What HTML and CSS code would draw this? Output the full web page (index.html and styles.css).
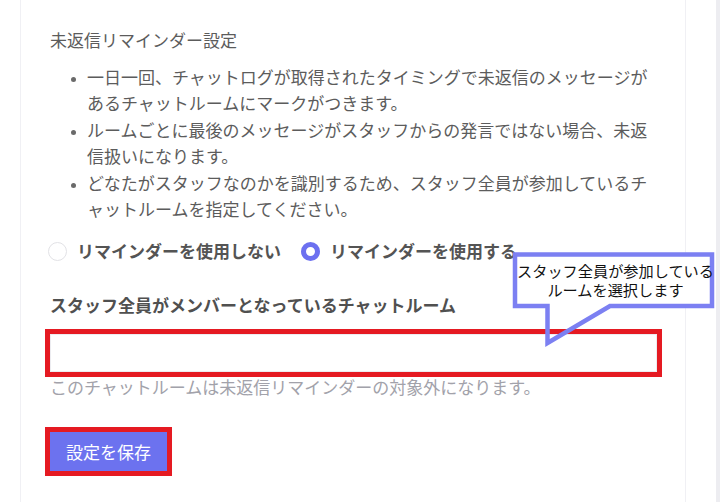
FILE: index.html
```html
<!DOCTYPE html>
<html lang="ja">
<head>
  <meta charset="UTF-8">
  <meta name="viewport" content="width=device-width, initial-scale=1.0">
  <title>未返信リマインダー設定</title>
  <link rel="stylesheet" href="styles.css">
</head>
<body>

  <div class="page">
    <div class="main">
      <div class="card">
        <h2 class="title">未返信リマインダー設定</h2>
        <ul class="notes">
          <li>一日一回、チャットログが取得されたタイミングで未返信のメッセージがあるチャットルームにマークがつきます。</li>
          <li>ルームごとに最後のメッセージがスタッフからの発言ではない場合、未返信扱いになります。</li>
          <li>どなたがスタッフなのかを識別するため、スタッフ全員が参加しているチャットルームを指定してください。</li>
        </ul>

        <div class="radios">
          <label class="radio"><input type="radio" name="reminder" value="off">リマインダーを使用しない</label>
          <label class="radio"><input type="radio" name="reminder" value="on" checked>リマインダーを使用する</label>
        </div>

        <h3 class="field-label">スタッフ全員がメンバーとなっているチャットルーム</h3>
        <input type="text" class="room-input mark">
        <p class="help">このチャットルームは未返信リマインダーの対象外になります。</p>

        <button class="save-btn mark">設定を保存</button>
      </div>
    </div>
    <div class="scroll-track"></div>

    <!-- annotation balloon -->
    <div class="callout">
      <svg class="callout-shape" width="210" height="100" viewBox="511 250 210 100">
        <rect x="515" y="254.5" width="197" height="51.5" fill="#ffffff"/>
        <path d="M515 254.5 H712 V306 H610 L547.5 343 V306 H515 Z" fill="none" stroke="#7c80f2" stroke-width="4.5"/>
      </svg>
      <div class="callout-text">スタッフ全員が参加している<br>ルームを選択します</div>
    </div>
  </div>

</body>
</html>
```

FILE: styles.css
```css
body {
  margin: 0;
  background-color: #ffffff;
  font-family: "Noto Sans CJK JP", "Noto Sans", sans-serif;
  color: #5c5c5c;
}
.page {
  position: relative;
  display: flex;
  height: 502px;
  overflow: hidden;
}
.main {
  flex: 1;
  padding-left: 20px;
  padding-right: 30px;
}
.card {
  height: 100%;
  box-sizing: border-box;
  border-left: 1px solid #f0f0f4;
  border-right: 1px solid #f0f0f4;
  padding: 28px 28px 0 29px;
}
.scroll-track {
  width: 4px;
  background-color: #ededf1;
}
.title {
  margin: 0;
  font-size: 17px;
  font-weight: normal;
  line-height: 24px;
  color: #5c5c5c;
}
.notes {
  margin: 12px 0 0;
  padding-left: 37px;
  font-size: 17px;
  line-height: 26.4px;
  color: #5c5c5c;
}
.notes li::marker {
  font-size: 12px;
  color: #6a6a6a;
}
.radios {
  display: flex;
  align-items: center;
  gap: 20px;
  margin: 17px 0 0 -2px;
  height: 24px;
}
.radio {
  display: flex;
  align-items: center;
  gap: 10px;
  font-size: 17px;
  font-weight: bold;
  line-height: 24px;
  color: #545454;
}
.radio input {
  appearance: none;
  margin: 0;
  width: 19px;
  height: 19px;
  border: 1px solid #e2e2e6;
  border-radius: 50%;
  background-color: #ffffff;
  box-sizing: border-box;
}
.radio input:checked {
  border: 5px solid #6c70f0;
}
.field-label {
  margin: 30px 0 0;
  font-size: 17px;
  font-weight: bold;
  line-height: 24px;
  color: #505050;
}
.room-input {
  display: block;
  margin-top: 17px;
  width: 100%;
  height: 38px;
  box-sizing: border-box;
  border: 1px solid #ececf0;
  background-color: #ffffff;
}
.mark {
  outline: 5px solid #e51a22;
}
.help {
  margin: 3px 0 0;
  font-size: 17px;
  line-height: 24px;
  color: #a2a2aa;
}
.save-btn {
  display: block;
  margin-top: 33px;
  width: 117px;
  height: 39px;
  padding: 0 0 1px;
  border: none;
  background-color: #6c72ef;
  color: #ffffff;
  font-family: inherit;
  font-size: 17px;
}
.callout {
  position: absolute;
  left: 511px;
  top: 250px;
  width: 210px;
  height: 100px;
}
.callout-shape {
  display: block;
}
.callout-text {
  position: absolute;
  left: 4px;
  top: 6px;
  width: 201px;
  height: 47px;
  display: flex;
  align-items: center;
  justify-content: center;
  text-align: center;
  font-size: 15.2px;
  line-height: 19px;
  color: #111111;
}
```
